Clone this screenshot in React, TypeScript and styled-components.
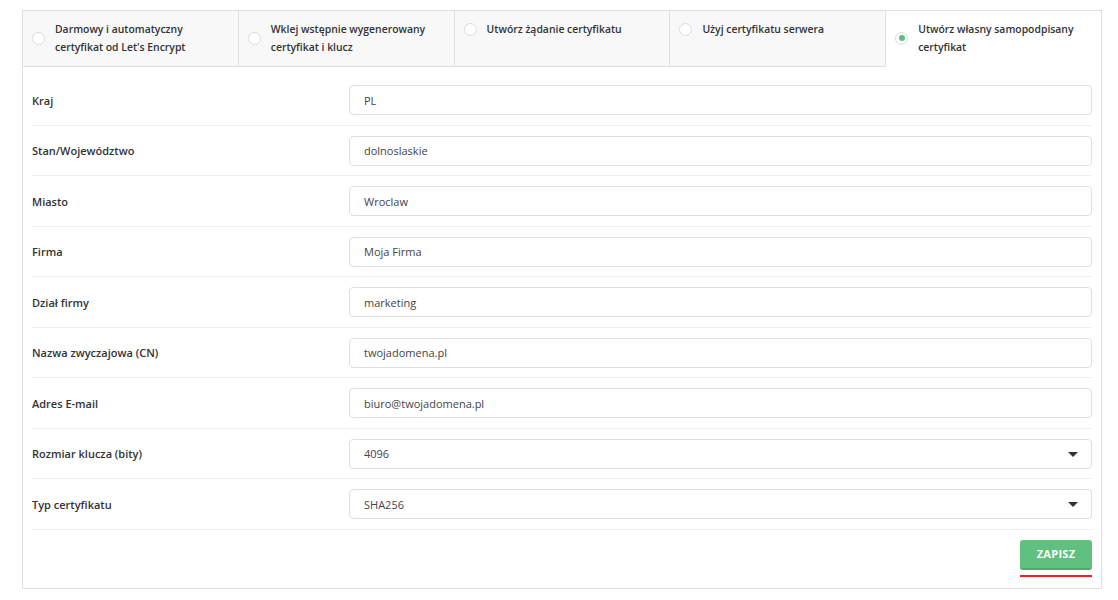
import styled, { createGlobalStyle } from 'styled-components';

const GlobalStyle = createGlobalStyle`
  body {
    margin: 0;
    background: #ffffff;
    font-family: "Open Sans", "Noto Sans", sans-serif;
    color: #333333;
  }
  * { box-sizing: border-box; }
`;

const tabs = [
  'Darmowy i automatyczny certyfikat od Let\'s Encrypt',
  'Wklej wstępnie wygenerowany certyfikat i klucz',
  'Utwórz żądanie certyfikatu',
  'Użyj certyfikatu serwera',
  'Utwórz własny samopodpisany certyfikat',
];

type Field = { label: string; value: string; select?: boolean };

const fields: Field[] = [
  { label: 'Kraj', value: 'PL' },
  { label: 'Stan/Województwo', value: 'dolnoslaskie' },
  { label: 'Miasto', value: 'Wroclaw' },
  { label: 'Firma', value: 'Moja Firma' },
  { label: 'Dział firmy', value: 'marketing' },
  { label: 'Nazwa zwyczajowa (CN)', value: 'twojadomena.pl' },
  { label: 'Adres E-mail', value: 'biuro@twojadomena.pl' },
  { label: 'Rozmiar klucza (bity)', value: '4096', select: true },
  { label: 'Typ certyfikatu', value: 'SHA256', select: true },
];

const Page = styled.div`
  padding: 10px 0 0 22px;
`;

const Panel = styled.div`
  width: 1080px;
  border: 1px solid #e0e0e0;
`;

const TabBar = styled.div`
  display: flex;
`;

const Tab = styled.div<{ $active?: boolean }>`
  flex: 1;
  height: 56px;
  display: flex;
  align-items: flex-start;
  padding: 9px 10px 8px 9px;
  background: ${(p) => (p.$active ? '#ffffff' : '#f8f8f8')};
  border-right: 1px solid #e0e0e0;
  border-bottom: 1px solid ${(p) => (p.$active ? 'transparent' : '#e0e0e0')};
  &:last-child {
    border-right: none;
  }
`;

const TabInner = styled.div`
  display: flex;
  align-items: center;
  gap: 10px;
`;

const Radio = styled.span<{ $checked?: boolean }>`
  flex: none;
  width: 13px;
  height: 13px;
  border-radius: 50%;
  border: 1px solid #dcdcdc;
  background: #ffffff;
  display: flex;
  align-items: center;
  justify-content: center;
  &::after {
    content: '';
    width: 6px;
    height: 6px;
    border-radius: 50%;
    background: ${(p) => (p.$checked ? '#5cbf7c' : 'transparent')};
  }
`;

const TabLabel = styled.span`
  font-size: 10.4px;
  font-weight: 600;
  line-height: 18px;
  color: #333333;
`;

const Body = styled.div`
  padding: 8px 9px 11px 9px;
`;

const Row = styled.div`
  display: grid;
  grid-template-columns: 317px 1fr;
  align-items: center;
  padding: 10px 0;
  border-bottom: 1px solid #eeeeee;
  height: 50.5px;
`;

const Label = styled.label`
  font-size: 11px;
  font-weight: 600;
  color: #333333;
`;

const InputBox = styled.div`
  position: relative;
  height: 30px;
  border: 1px solid #e0e0e0;
  border-radius: 4px;
  background: #ffffff;
  display: flex;
  align-items: center;
  padding: 0 14px;
  font-size: 11px;
  color: #444444;
`;

const Caret = styled.span`
  position: absolute;
  right: 13px;
  top: 12px;
  width: 0;
  height: 0;
  border-left: 5px solid transparent;
  border-right: 5px solid transparent;
  border-top: 5px solid #333333;
`;

const Footer = styled.div`
  display: flex;
  justify-content: flex-end;
  padding-top: 10px;
`;

const SaveWrap = styled.div`
  display: flex;
  flex-direction: column;
  gap: 5px;
`;

const SaveButton = styled.button`
  width: 72px;
  height: 30px;
  border: none;
  border-bottom: 2px solid #4fae6d;
  border-radius: 3px;
  background: #5fc080;
  color: #ffffff;
  font-family: inherit;
  font-size: 11px;
  font-weight: 700;
  letter-spacing: 0.3px;
  cursor: pointer;
`;

const Underline = styled.div`
  height: 2px;
  background: #ff1a1a;
`;

export default function App() {
  return (
    <Page>
      <GlobalStyle />
      <Panel>
        <TabBar>
          {tabs.map((t, i) => {
            const active = i === tabs.length - 1;
            return (
              <Tab key={t} $active={active}>
                <TabInner>
                  <Radio $checked={active} />
                  <TabLabel>{t}</TabLabel>
                </TabInner>
              </Tab>
            );
          })}
        </TabBar>
        <Body>
          {fields.map((f) => (
            <Row key={f.label}>
              <Label>{f.label}</Label>
              <InputBox>
                {f.value}
                {f.select && <Caret />}
              </InputBox>
            </Row>
          ))}
          <Footer>
            <SaveWrap>
              <SaveButton>ZAPISZ</SaveButton>
              <Underline />
            </SaveWrap>
          </Footer>
        </Body>
      </Panel>
    </Page>
  );
}
